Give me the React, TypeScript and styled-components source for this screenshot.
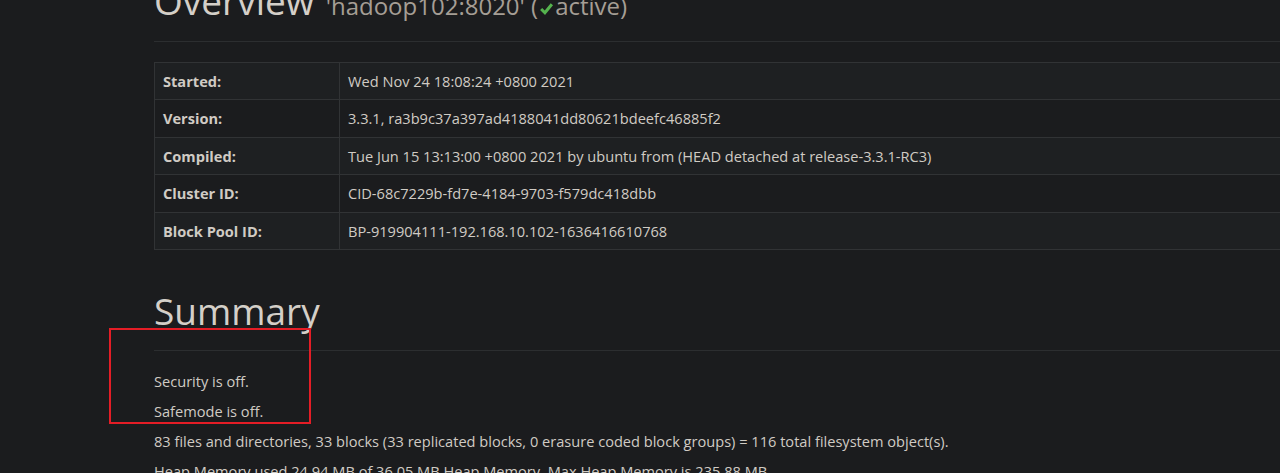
import React from 'react';
import styled, { createGlobalStyle } from 'styled-components';

const GlobalStyle = createGlobalStyle`
  html, body {
    margin: 0;
    padding: 0;
    background: #1b1c1e;
    overflow: hidden;
  }
  body {
    font-family: "Open Sans", "Liberation Sans", sans-serif;
    font-size: 14.6px;
    line-height: 20px;
    color: #d0cbc4;
  }
`;

const Page = styled.div`
  position: relative;
  width: 1140px;
  padding-left: 154px;
  margin-top: -19px;
`;

const PageHeader = styled.div<{ $first?: boolean }>`
  padding-bottom: ${(p) => (p.$first ? '5px' : '9px')};
  margin: ${(p) => (p.$first ? '0' : '41px')} 0 20px;
  border-bottom: 1px solid #2c2e30;
`;

const Title = styled.h1`
  margin: 0 0 10px;
  font-size: 37px;
  line-height: 40px;
  font-weight: 400;
  color: #d4cfc8;
`;

const SubTitle = styled.small`
  margin-left: 5px;
  font-size: 24px;
  color: #a59e95;
  font-weight: 400;
`;

const Check = styled.svg`
  width: 15px;
  height: 15px;
  margin: 0 1px;
  vertical-align: -1px;
`;

const InfoTable = styled.table`
  width: 100%;
  border-collapse: collapse;
  margin-bottom: 20px;
  border: 1px solid #313335;
`;

const Row = styled.tr`
  &:nth-child(odd) {
    background: #1e2022;
  }
`;

const Label = styled.th`
  width: 168px;
  padding: 8px;
  line-height: 20.4px;
  text-align: left;
  font-weight: 700;
  border: 1px solid #313335;
`;

const Value = styled.td`
  padding: 8px;
  line-height: 20.4px;
  border: 1px solid #313335;
`;

const Para = styled.p`
  margin: 0 0 10px;
`;

const Highlight = styled.div`
  position: absolute;
  left: 109px;
  top: 347px;
  width: 198px;
  height: 92px;
  border: 2px solid #e41d26;
  pointer-events: none;
`;

const info: [string, string][] = [
  ['Started:', 'Wed Nov 24 18:08:24 +0800 2021'],
  ['Version:', '3.3.1, ra3b9c37a397ad4188041dd80621bdeefc46885f2'],
  ['Compiled:', 'Tue Jun 15 13:13:00 +0800 2021 by ubuntu from (HEAD detached at release-3.3.1-RC3)'],
  ['Cluster ID:', 'CID-68c7229b-fd7e-4184-9703-f579dc418dbb'],
  ['Block Pool ID:', 'BP-919904111-192.168.10.102-1636416610768'],
];

export default function App(): JSX.Element {
  return (
    <>
      <GlobalStyle />
      <Page>
        <PageHeader $first>
          <Title>
            Overview
            <SubTitle>
              {' '}'hadoop102:8020' (
              <Check viewBox="0 0 14 14">
                <path d="M2 7.5 L5.5 11 L12 3" fill="none" stroke="#55b34e" strokeWidth="2.8" />
              </Check>
              active)
            </SubTitle>
          </Title>
        </PageHeader>
        <InfoTable>
          <tbody>
            {info.map(([k, v]) => (
              <Row key={k}>
                <Label>{k}</Label>
                <Value>{v}</Value>
              </Row>
            ))}
          </tbody>
        </InfoTable>
        <PageHeader>
          <Title>Summary</Title>
        </PageHeader>
        <Para>Security is off.</Para>
        <Para>Safemode is off.</Para>
        <Para>
          83 files and directories, 33 blocks (33 replicated blocks, 0 erasure coded block groups) = 116 total filesystem object(s).
        </Para>
        <Para>Heap Memory used 24.94 MB of 36.05 MB Heap Memory. Max Heap Memory is 235.88 MB.</Para>
        <Highlight />
      </Page>
    </>
  );
}
